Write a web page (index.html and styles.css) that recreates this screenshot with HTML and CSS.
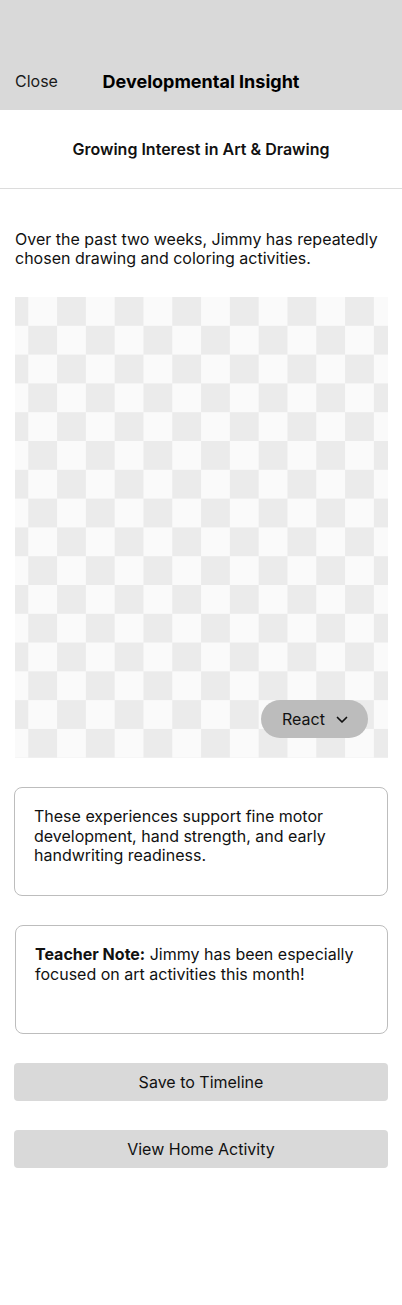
FILE: index.html
```html
<!DOCTYPE html>
<html lang="en">
<head>
<meta charset="utf-8">
<title>Developmental Insight</title>
<link rel="stylesheet" href="styles.css">
</head>
<body>
<header class="topbar">
  <div class="nav">
    <span class="close">Close</span>
    <h1 class="title">Developmental Insight</h1>
    <span class="spacer"></span>
  </div>
</header>
<section class="subhead">
  <h2 class="subtitle">Growing Interest in Art &amp; Drawing</h2>
</section>
<main class="content">
  <p class="intro">Over the past two weeks, Jimmy has repeatedly chosen drawing and coloring activities.</p>
  <div class="photo">
    <button class="react">React
      <svg class="chev" width="12" height="8" viewBox="0 0 12 8"><path d="M1.5 1.5 L6 6 L10.5 1.5" fill="none" stroke="#111" stroke-width="1.7" stroke-linecap="round" stroke-linejoin="round"/></svg>
    </button>
  </div>
  <div class="card">These experiences support fine motor development, hand strength, and early handwriting readiness.</div>
  <div class="card"><p class="note"><strong>Teacher Note:</strong> Jimmy has been especially focused on art activities this month!</p></div>
  <button class="action">Save to Timeline</button>
  <button class="action">View Home Activity</button>
</main>
</body>
</html>
```
FILE: styles.css
```css
* { box-sizing: border-box; }
html, body { margin: 0; padding: 0; background: #fff; }
body {
  font-family: Inter, "Liberation Sans", Arial, sans-serif;
  color: #111;
  width: 402px;
  height: 1305px;
}
.topbar {
  background: #d9d9d9;
  height: 110px;
  padding-top: 61px;
}
.nav {
  display: grid;
  grid-template-columns: 1fr auto 1fr;
  align-items: center;
  height: 40px;
  padding: 0 15px;
}
.close { font-size: 16px; color: #1a1a1a; }
.title {
  margin: 0;
  font-size: 18px;
  font-weight: 700;
  color: #000;
}
.subhead {
  height: 79px;
  border-bottom: 1px solid #dcdcdc;
  display: flex;
  align-items: center;
  justify-content: center;
}
.subtitle {
  margin: 0;
  font-size: 16px;
  font-weight: 600;
  color: #111;
}
.content {
  padding: 0 14px;
  display: flex;
  flex-direction: column;
}
.intro {
  margin: 41px 1px 0;
  font-size: 16px;
  line-height: 19px;
  color: #111;
}
.photo {
  margin-top: 29px;
  margin-left: 1px;
  height: 461px;
  background-color: #fafafa;
  background-image: conic-gradient(#ebebeb 25%, #fafafa 0 50%, #ebebeb 0 75%, #fafafa 0);
  background-size: 57.6px 57.6px;
  background-position: 13.3px 0;
  display: flex;
  align-items: flex-end;
  justify-content: flex-end;
  padding: 0 20px 20px 0;
}
.react {
  display: flex;
  align-items: center;
  gap: 11px;
  height: 38px;
  width: 107px;
  padding: 0 0 0 21px;
  border: none;
  border-radius: 19px;
  background: #bcbcbc;
  font-family: inherit;
  font-size: 16px;
  color: #111;
}
.chev { display: block; margin-top: 1px; }
.card {
  margin-top: 29px;
  height: 109px;
  border: 1px solid #bdbdbd;
  border-radius: 8px;
  padding: 19px 19px;
  font-size: 16px;
  line-height: 19.5px;
  color: #111;
}
.card + .card { margin-left: 1px; }
.note { margin: 0; }
.note strong { font-weight: 700; }
.action {
  margin-top: 29px;
  height: 38px;
  border: none;
  border-radius: 4px;
  background: #d9d9d9;
  font-family: inherit;
  font-size: 16px;
  color: #111;
}
```
